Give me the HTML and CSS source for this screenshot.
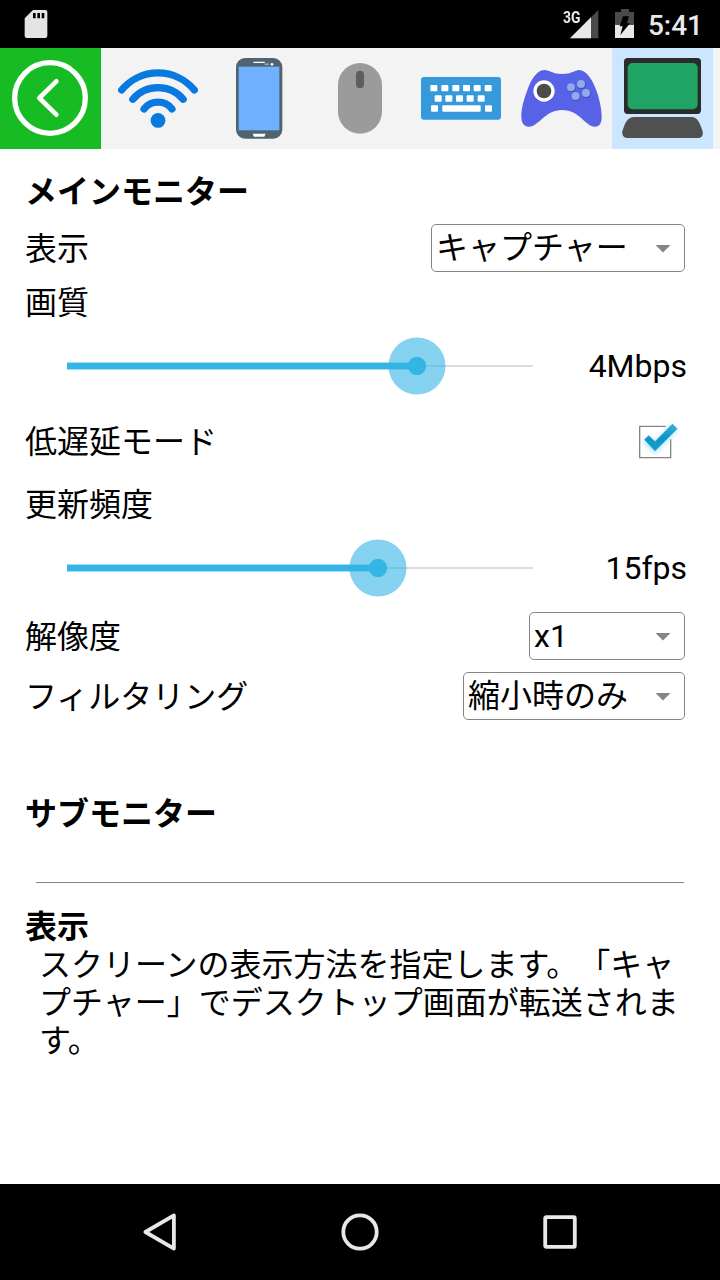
FILE: index.html
```html
<!DOCTYPE html>
<html lang="ja">
<head>
<meta charset="utf-8">
<title>メインモニター</title>
<link rel="stylesheet" href="styles.css">
</head>
<body>
<div class="screen">
  <header class="status">
    <svg class="sd" viewBox="72 27 72 90"><path fill="#e4e4e4" fill-rule="evenodd" d="M99 30H136Q142 30 142 36V108Q142 114 136 114H80Q74 114 74 108V55ZM99 39V55H107V39ZM112 39V55H120V39ZM125 39V55H133V39Z"/></svg>
    <div class="status-right">
      <span class="net">3G</span>
      <svg class="signal" viewBox="90 27 90 90"><path fill="#4a4a4a" d="M178 30V115H93Z"/><path fill="#e8e8e8" d="M156 52V115H93Z"/></svg>
      <svg class="battery" viewBox="228 27 60 90"><path fill="#4a4a4a" d="M246 27H270V36H285V75H228V36H246Z"/><path fill="#e8e8e8" d="M228 75H285V114H228Z"/><path fill="#000" d="M252 49H270L264 70H273L244 105L251 79H242Z"/></svg>
      <span class="clock">5:41</span>
    </div>
  </header>

  <nav class="tabs">
    <div class="tab back"><svg viewBox="0 144 303 303"><g fill="none" stroke="#fff" stroke-linecap="round" stroke-linejoin="round"><circle cx="150" cy="294" r="106" stroke-width="16"/><path d="M169 244L118 294L169 344" stroke-width="14"/></g></svg></div>
    <div class="tab"><svg viewBox="0 0 101 101"><g fill="none" stroke="#0879df" stroke-width="7.2" stroke-linecap="round"><path d="M14.7 42A47.2 47.2 0 0 1 87.3 42"/><path d="M25.8 51.3A33.2 33.2 0 0 1 76.2 51.3"/><path d="M37 61A17.8 17.8 0 0 1 65 61"/></g><circle cx="51" cy="72.4" r="7.4" fill="#0879df"/></svg></div>
    <div class="tab"><svg viewBox="-36 9 303 303"><rect x="48" y="39" width="139" height="242" rx="27" fill="#4f646f"/><rect x="56" y="65" width="122" height="191" fill="#70b1ff"/><path d="M102 52H133" stroke="#fff" stroke-width="4" stroke-linecap="round"/><circle cx="137" cy="58" r="3" fill="#a9b6bc"/><circle cx="143" cy="58" r="3" fill="#a9b6bc"/><circle cx="156" cy="58" r="4" fill="#fff"/><path d="M98 266H137L133 275H102Z" fill="#fff"/></svg></div>
    <div class="tab"><svg viewBox="267 9 303 303"><rect x="354" y="54" width="132" height="212" rx="66" fill="#9b9b9b"/><rect x="408" y="77" width="24" height="53" rx="12" fill="#5e5e5e"/></svg></div>
    <div class="tab"><svg viewBox="0 9 303 303"><rect x="33" y="96" width="240" height="128" rx="9" fill="#3599db"/><g fill="#fff"><rect x="61" y="120" width="21" height="19" rx="3"/><rect x="94" y="120" width="21" height="19" rx="3"/><rect x="127" y="120" width="21" height="19" rx="3"/><rect x="159" y="120" width="21" height="19" rx="3"/><rect x="191" y="120" width="21" height="19" rx="3"/><rect x="224" y="120" width="21" height="19" rx="3"/><rect x="74" y="151" width="21" height="19" rx="3"/><rect x="106" y="151" width="21" height="19" rx="3"/><rect x="138" y="151" width="21" height="19" rx="3"/><rect x="170" y="151" width="21" height="19" rx="3"/><rect x="203" y="151" width="21" height="19" rx="3"/><rect x="63" y="181" width="21" height="19" rx="3"/><rect x="97" y="181" width="115" height="19" rx="3"/><rect x="225" y="181" width="21" height="19" rx="3"/></g></svg></div>
    <div class="tab"><svg viewBox="303 9 303 303"><path fill="#5862e7" d="M404 75C418 75 428 87 457 87C485 87 495 75 507 75C528 75 548 103 560 139C568 162 575 190 575 215C575 234 569 245 555 245C526 245 509 195 456 195C405 195 386 245 357 245C341 245 334 234 334 214C334 187 344 157 354 130C366 98 383 75 404 75Z"/><circle cx="402" cy="138" r="32" fill="#fff"/><circle cx="402" cy="138" r="22" fill="#4d4d4d"/><g fill="#424bb2"><circle cx="485" cy="130" r="12"/><circle cx="515" cy="120" r="12"/><circle cx="499" cy="156" r="12"/><circle cx="530" cy="147" r="12"/></g><g fill="#92aaea"><circle cx="483" cy="127" r="12"/><circle cx="513" cy="117" r="12"/><circle cx="497" cy="153" r="12"/><circle cx="528" cy="144" r="12"/></g></svg></div>
    <div class="tab active"><svg viewBox="606 9 303 303"><rect x="642" y="39" width="231" height="168" rx="11" fill="#2b2b2b"/><rect x="653" y="54" width="210" height="139" rx="15" fill="#1fa463"/><path fill="#505050" d="M672 216H844C862 216 870 234 878 260C880 271 875 279 864 279H652C641 279 635 270 637 259C645 232 654 216 672 216Z"/></svg></div>
  </nav>

  <main class="content">
    <h2 class="title main-title">メインモニター</h2>
    <div class="row"><span class="name">表示</span><div class="select capture"><span>キャプチャー</span><i class="arrow"></i></div></div>
    <div class="label quality">画質</div>
    <div class="slider-row bitrate"><div class="slider"><div class="fill" style="width:350px"><i class="thumb"></i></div></div><span class="value">4Mbps</span></div>
    <div class="row latency"><span class="name">低遅延モード</span>
      <svg class="check" viewBox="786 624 162 138"><defs><filter id="glow" x="-50%" y="-50%" width="200%" height="200%"><feGaussianBlur stdDeviation="8"/></filter><linearGradient id="tick" x1="0" y1="0" x2="0" y2="1"><stop offset="0" stop-color="#35b2df"/><stop offset=".5" stop-color="#0797ca"/><stop offset="1" stop-color="#129fd2"/></linearGradient></defs><path d="M887 649H809V743H902V688" fill="none" stroke="#858585" stroke-width="4"/><path d="M828 687L855 714L914 651" fill="none" stroke="#63d2fa" stroke-opacity=".6" stroke-width="24" filter="url(#glow)"/><path fill="url(#tick)" stroke="#318dae" stroke-width="2" d="M824 689L836 677L855 695L907 643L921 656L855 722Z"/></svg>
    </div>
    <div class="label rate">更新頻度</div>
    <div class="slider-row framerate"><div class="slider"><div class="fill" style="width:311px"><i class="thumb"></i></div></div><span class="value">15fps</span></div>
    <div class="row"><span class="name">解像度</span><div class="select scale"><span>x1</span><i class="arrow"></i></div></div>
    <div class="row"><span class="name">フィルタリング</span><div class="select filter"><span>縮小時のみ</span><i class="arrow"></i></div></div>
    <h2 class="title sub-title">サブモニター</h2>
    <hr class="divider">
    <section class="help">
      <h3 class="title">表示</h3>
      <p class="help-text">スクリーンの表示方法を指定します。「キャプチャー」でデスクトップ画面が転送されます。</p>
    </section>
  </main>

  <footer class="navbar">
    <svg viewBox="0 0 48 48"><path d="M9.7 24L38.2 7.4V40.6Z" transform="translate(-.3 0)"/></svg>
    <svg viewBox="0 0 48 48"><circle cx="24" cy="24" r="16.7"/></svg>
    <svg viewBox="0 0 48 48"><rect x="9.2" y="9.2" width="29.6" height="29.6" rx="1"/></svg>
  </footer>
</div>
</body>
</html>
```
FILE: styles.css
```css
* { box-sizing: border-box; }
body {
  margin: 0;
  background: #fff;
  color: #000;
  font: 32px/38px Roboto, "Noto Sans CJK JP", sans-serif;
  text-spacing-trim: space-all;
}
svg { display: block; flex: none; }
.screen { width: 720px; height: 1280px; display: flex; flex-direction: column; overflow: hidden; }

.status {
  height: 48px;
  flex: none;
  padding: 0 17px 0 24px;
  display: flex;
  align-items: center;
  justify-content: space-between;
  background: #000;
  color: #e8e8e8;
}
.sd { width: 24px; height: 30px; }
.status-right { display: flex; align-items: center; height: 48px; }
.net { font-size: 17px; font-weight: 700; line-height: 18px; width: 17px; margin-top: 8px; transform: scaleX(.82); transform-origin: left; align-self: flex-start; margin-right: -11px; white-space: nowrap; }
.signal { width: 30px; height: 30px; }
.battery { width: 20px; height: 30px; margin-left: 16px; }
.clock { font-size: 28px; font-weight: 500; margin-left: 13px; padding-top: 3px; line-height: 45px; }

.tabs { height: 101px; flex: none; display: flex; background: #f3f3f3; }
.tab { width: 101px; height: 101px; flex: none; }
.tab svg { width: 101px; height: 101px; }
.back { background: #17bc25; margin-right: 6px; }
.active { background: #cce6ff; }

.content { flex: 1; padding: 17px 35px 0 25px; }
.title { margin: 0; font-size: 32px; font-weight: 700; }
.main-title { height: 52px; line-height: 52px; }
.row { height: 60px; display: flex; align-items: center; justify-content: space-between; }
.label { display: flex; align-items: center; padding-top: 2px; }
.name { padding-top: 1px; }
.quality { height: 48px; }
.rate { height: 56px; }
.latency { height: 70px; }
.check { width: 54px; height: 46px; margin-right: -1px; }

.select {
  height: 48px;
  padding: 0 13px 0 4px;
  display: flex;
  align-items: center;
  justify-content: space-between;
  border: 1px solid #858585;
  border-radius: 5px;
}
.capture { width: 254px; }
.scale { width: 156px; }
.filter { width: 222px; }
.arrow { width: 16px; height: 8px; margin-top: 1px; background: #858585; clip-path: polygon(0 0, 100% 0, 50% 100%); }

.slider-row { display: flex; align-items: center; justify-content: space-between; padding-left: 42px; margin-right: -2px; }
.bitrate { height: 80px; }
.framerate { height: 72px; margin-bottom: 2px; }
.slider { width: 466px; height: 8px; display: flex; background: linear-gradient(#dcdcdc, #dcdcdc) center / 100% 2px no-repeat; }
.fill { height: 8px; position: relative; background: #33b5e5; border: solid #a2def4; border-width: 1px 0; }
.thumb {
  position: absolute;
  right: -29px;
  top: -26px;
  width: 58px;
  height: 58px;
  border-radius: 50%;
  background: radial-gradient(circle, #33b5e5 8.7px, rgba(51, 181, 229, .6) 9.5px, rgba(51, 181, 229, .6) 28px, transparent 29px);
}

.sub-title { margin-top: 58px; height: 60px; line-height: 60px; }
.divider { height: 1px; margin: 38px 1px 0 11px; border: 0; background: #858585; }
.help { padding-top: 25px; }
.help-text { margin: 0 -6px 0 14px; width: 642px; line-break: anywhere; }

.navbar { height: 96px; flex: none; display: flex; align-items: center; justify-content: center; gap: 152px; background: #000; }
.navbar svg { width: 48px; height: 48px; fill: none; stroke: #e8e8e8; stroke-width: 3.8; stroke-linejoin: round; }
```
